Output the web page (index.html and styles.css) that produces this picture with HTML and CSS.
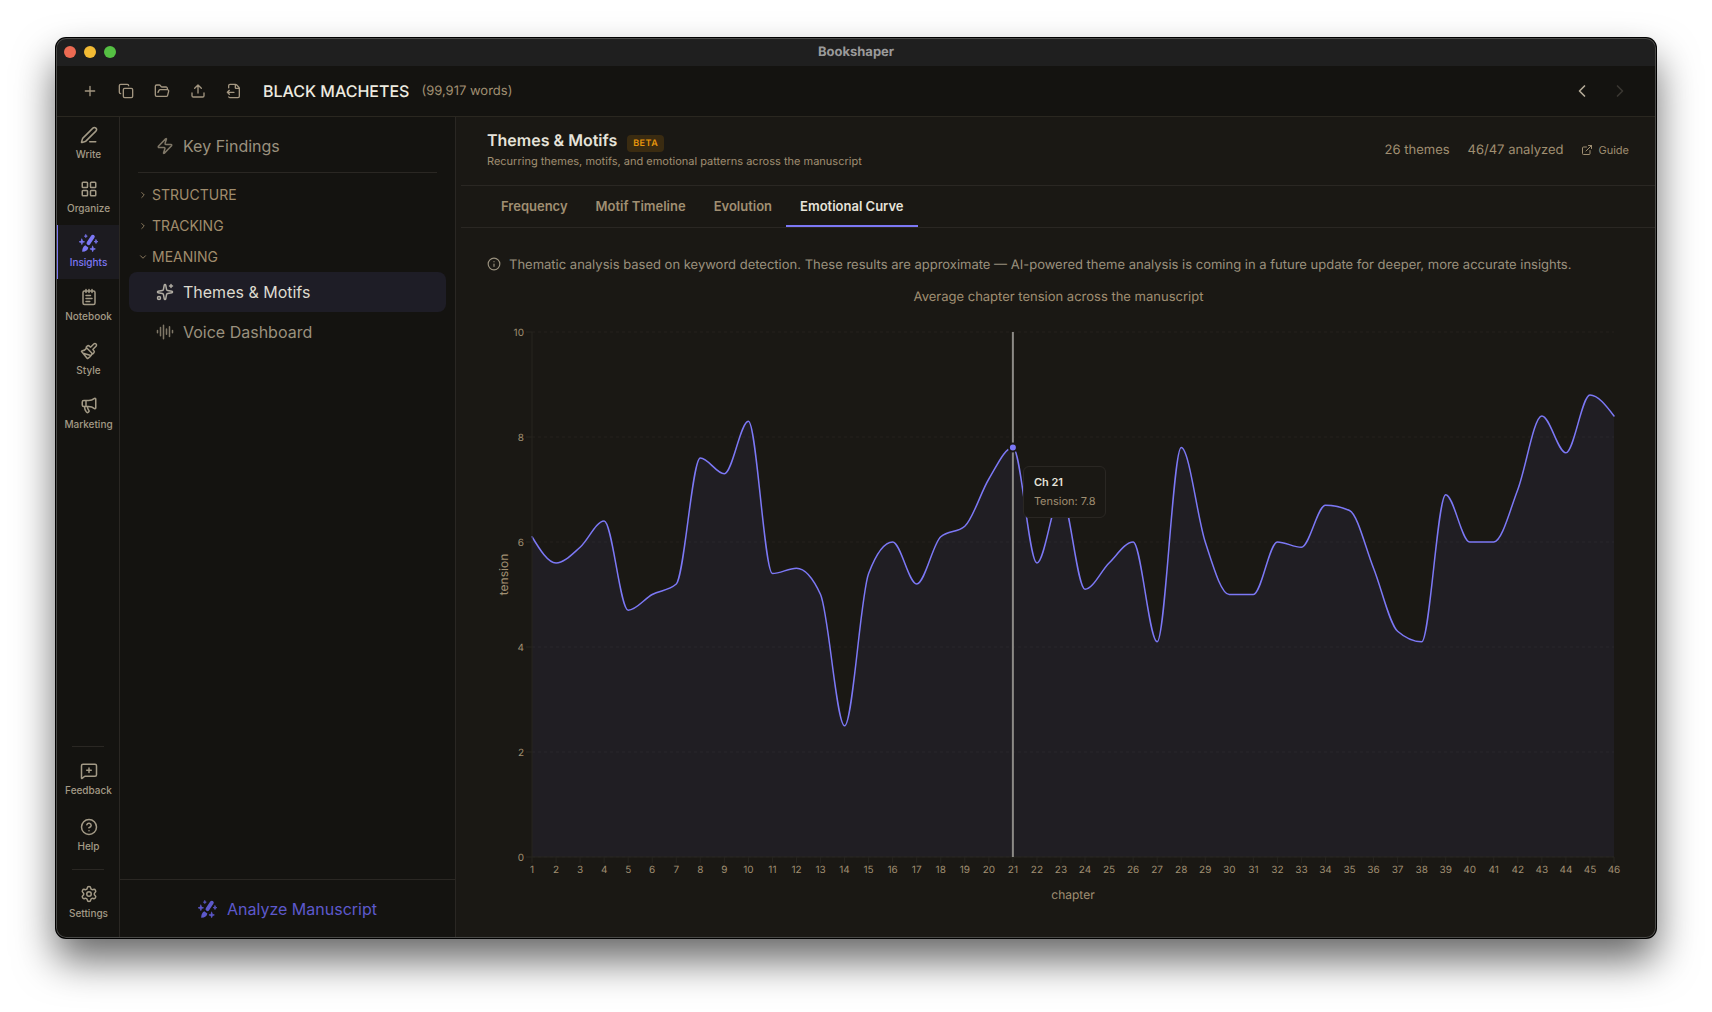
FILE: index.html
```html
<!DOCTYPE html>
<html lang="en">
<head>
    <meta charset="UTF-8">
    <title>Bookshaper</title>
    <link rel="stylesheet" href="styles.css">
</head>
<body>
    <svg class="sprite" aria-hidden="true">
        <symbol id="wand" viewBox="0 0 24 24">
            <path d="M16.600 4.400L11.400 12.200" stroke="currentColor" stroke-width="4.600"/>
            <path d="M7.400 14.600l3.800 2.700c-.3 2.900-2.900 5-7.400 5.200.1-3.300.8-6.500 3.600-7.900z"/>
            <path d="M3.400 7.300l.9 2.400 2.400.9-2.400.9-.9 2.400-.9-2.400-2.400-.9 2.400-.9zM8.200 2l.5 1.300 1.300.5-1.300.5-.5 1.300-.5-1.300-1.300-.5 1.300-.5zM20.400 8.100l.6 1.700 1.700.6-1.700.6-.6 1.700-.6-1.700-1.700-.6 1.700-.6zM16.400 15.800l.9 2.400 2.400.9-2.400.9-.9 2.400-.9-2.400-2.400-.9 2.400-.9z" stroke="currentColor" stroke-width=".8"/>
        </symbol>
    </svg>
    <div class="window">
        <div class="titlebar">
            <div class="lights"><i class="red"></i><i class="yellow"></i><i class="green"></i></div>
            <span>Bookshaper</span>
        </div>

        <header class="toolbar">
            <button class="tool" aria-label="New"><svg viewBox="0 0 24 24"><path d="M5 12h14M12 5v14"/></svg></button>
            <button class="tool" aria-label="Duplicate"><svg viewBox="0 0 24 24"><rect x="8" y="8" width="14" height="14" rx="2"/><path d="M4 16c-1.100 0-2-.9-2-2V4c0-1.100.9-2 2-2h10c1.100 0 2 .9 2 2"/></svg></button>
            <button class="tool" aria-label="Open"><svg viewBox="0 0 24 24"><path d="m6 14 1.500-2.900A2 2 0 0 1 9.240 10H20a2 2 0 0 1 1.940 2.500l-1.540 6a2 2 0 0 1-1.950 1.500H4a2 2 0 0 1-2-2V5a2 2 0 0 1 2-2h3.900a2 2 0 0 1 1.690.9l.81 1.200a2 2 0 0 0 1.670.9H18a2 2 0 0 1 2 2v2"/></svg></button>
            <button class="tool" aria-label="Export"><svg viewBox="0 0 24 24"><path d="M12 3v12M17 8l-5-5-5 5M21 15v4a2 2 0 0 1-2 2H5a2 2 0 0 1-2-2v-4"/></svg></button>
            <button class="tool" aria-label="Import"><svg viewBox="0 0 24 24"><path d="M4.226 20.925A2 2 0 0 0 6 22h12a2 2 0 0 0 2-2V8a2.400 2.400 0 0 0-.706-1.706l-3.588-3.588A2.400 2.400 0 0 0 14 2H6a2 2 0 0 0-2 2v3.127M14 2v5a1 1 0 0 0 1 1h5M5 11l-3 3M5 17l-3-3h10"/></svg></button>
            <h1 class="book">BLACK MACHETES</h1>
            <span class="words">(99,917 words)</span>
            <div class="history">
                <button class="arrow" aria-label="Back"><svg viewBox="0 0 24 24"><path d="m15 18-6-6 6-6"/></svg></button>
                <button class="arrow" aria-label="Forward" disabled><svg viewBox="0 0 24 24"><path d="m9 18 6-6-6-6"/></svg></button>
            </div>
        </header>

        <div class="body">
            <nav class="rail">
                <button class="rail-item"><svg viewBox="0 0 24 24"><path d="M13 21h8M21.174 6.812a1 1 0 0 0-3.986-3.987L3.842 16.174a2 2 0 0 0-.5.830l-1.321 4.352a.5.5 0 0 0 .623.622l4.353-1.320a2 2 0 0 0 .830-.497z"/></svg>Write</button>
                <button class="rail-item"><svg viewBox="0 0 24 24"><rect x="3" y="3" width="7" height="7" rx="1"/><rect x="14" y="3" width="7" height="7" rx="1"/><rect x="14" y="14" width="7" height="7" rx="1"/><rect x="3" y="14" width="7" height="7" rx="1"/></svg>Organize</button>
                <button class="rail-item active"><svg class="solid"><use href="#wand"/></svg>Insights</button>
                <button class="rail-item"><svg viewBox="0 0 24 24"><path d="M8 2v4M12 2v4M16 2v4M8 10h6M8 14h8M8 18h5"/><rect x="4" y="4" width="16" height="18" rx="2"/></svg>Notebook</button>
                <button class="rail-item"><svg viewBox="0 0 24 24"><path d="m14.622 17.897-10.680-2.913M18.376 2.622a1 1 0 1 1 3.002 3.002L17.360 9.643a.5.5 0 0 0 0 .707l.944.944a2.410 2.410 0 0 1 0 3.408l-.944.944a.5.5 0 0 1-.707 0L8.354 7.348a.5.5 0 0 1 0-.707l.944-.944a2.410 2.410 0 0 1 3.408 0l.944.944a.5.5 0 0 0 .707 0zM9 8c-1.804 2.710-3.970 3.460-6.583 3.948a.507.507 0 0 0-.302.819l7.320 8.883a1 1 0 0 0 1.185.204C12.735 20.405 16 16.792 16 15"/></svg>Style</button>
                <button class="rail-item"><svg viewBox="0 0 24 24"><path d="M11 6a13 13 0 0 0 8.400-2.800A1 1 0 0 1 21 4v12a1 1 0 0 1-1.600.8A13 13 0 0 0 11 14H5a2 2 0 0 1-2-2V8a2 2 0 0 1 2-2zM6 14a12 12 0 0 0 2.400 7.200 2 2 0 0 0 3.200-2.400A8 8 0 0 1 10 14M8 6v8"/></svg>Marketing</button>
                <div class="rail-bottom">
                    <hr>
                    <button class="rail-item"><svg viewBox="0 0 24 24"><path d="M22 17a2 2 0 0 1-2 2H6.828a2 2 0 0 0-1.414.586l-2.202 2.202A.71.71 0 0 1 2 21.286V5a2 2 0 0 1 2-2h16a2 2 0 0 1 2 2zM12 8v6M9 11h6"/></svg>Feedback</button>
                    <button class="rail-item"><svg viewBox="0 0 24 24"><circle cx="12" cy="12" r="10"/><path d="M9.090 9a3 3 0 0 1 5.830 1c0 2-3 3-3 3M12 17h.01"/></svg>Help</button>
                    <hr>
                    <button class="rail-item"><svg viewBox="0 0 24 24"><path d="M9.671 4.136a2.340 2.340 0 0 1 4.659 0 2.340 2.340 0 0 0 3.319 1.915 2.340 2.340 0 0 1 2.330 4.033 2.340 2.340 0 0 0 0 3.831 2.340 2.340 0 0 1-2.330 4.033 2.340 2.340 0 0 0-3.319 1.915 2.340 2.340 0 0 1-4.659 0 2.340 2.340 0 0 0-3.320-1.915 2.340 2.340 0 0 1-2.330-4.033 2.340 2.340 0 0 0 0-3.831A2.340 2.340 0 0 1 6.350 6.051a2.340 2.340 0 0 0 3.319-1.915"/><circle cx="12" cy="12" r="3"/></svg>Settings</button>
                </div>
            </nav>

            <aside class="panel">
                <div class="panel-list">
                    <button class="row"><svg viewBox="0 0 24 24"><path d="M4 14a1 1 0 0 1-.78-1.630l9.900-10.200a.5.5 0 0 1 .86.460l-1.920 6.020A1 1 0 0 0 13 10h7a1 1 0 0 1 .78 1.630l-9.900 10.200a.5.5 0 0 1-.86-.460l1.920-6.020A1 1 0 0 0 11 14z"/></svg>Key Findings</button>
                    <hr>
                    <button class="group"><svg viewBox="0 0 24 24"><path d="m9 18 6-6-6-6"/></svg>STRUCTURE</button>
                    <button class="group"><svg viewBox="0 0 24 24"><path d="m9 18 6-6-6-6"/></svg>TRACKING</button>
                    <button class="group"><svg viewBox="0 0 24 24"><path d="m6 9 6 6 6-6"/></svg>MEANING</button>
                    <button class="row active"><svg viewBox="0 0 24 24"><path d="M11.017 2.814a1 1 0 0 1 1.966 0l1.051 5.558a2 2 0 0 0 1.594 1.594l5.558 1.051a1 1 0 0 1 0 1.966l-5.558 1.051a2 2 0 0 0-1.594 1.594l-1.051 5.558a1 1 0 0 1-1.966 0l-1.051-5.558a2 2 0 0 0-1.594-1.594l-5.558-1.051a1 1 0 0 1 0-1.966l5.558-1.051a2 2 0 0 0 1.594-1.594zM20 2v4M22 4h-4"/><circle cx="4" cy="20" r="2"/></svg>Themes &amp; Motifs</button>
                    <button class="row"><svg viewBox="0 0 24 24"><path d="M2 10v3M6 6v11M10 3v18M14 8v7M18 5v13M22 10v3"/></svg>Voice Dashboard</button>
                </div>
                <button class="analyze"><svg class="solid"><use href="#wand"/></svg>Analyze Manuscript</button>
            </aside>

            <main class="main">
                <div class="head">
                    <div>
                        <h2>Themes &amp; Motifs <span class="beta">BETA</span></h2>
                        <p>Recurring themes, motifs, and emotional patterns across the manuscript</p>
                    </div>
                    <div class="stats">
                        <span>26 themes</span>
                        <span>46/47 analyzed</span>
                        <a href="#guide"><svg viewBox="0 0 24 24"><path d="M15 3h6v6M10 14 21 3M18 13v6a2 2 0 0 1-2 2H5a2 2 0 0 1-2-2V8a2 2 0 0 1 2-2h6"/></svg>Guide</a>
                    </div>
                </div>
                <div class="tabs" role="tablist">
                    <button role="tab">Frequency</button>
                    <button role="tab">Motif Timeline</button>
                    <button role="tab">Evolution</button>
                    <button role="tab" class="active" aria-selected="true">Emotional Curve</button>
                </div>
                <section class="content">
                    <p class="note"><svg viewBox="0 0 24 24"><circle cx="12" cy="12" r="10"/><path d="M12 16v-4M12 8h.01"/></svg>Thematic analysis based on keyword detection. These results are approximate — AI-powered theme analysis is coming in a future update for deeper, more accurate insights.</p>
                    <p class="caption">Average chapter tension across the manuscript</p>
                    <div class="chart" id="chart">
                        <svg id="plot"></svg>
                        <div class="tip" id="tip"><b></b><span></span></div>
                    </div>
                </section>
            </main>
        </div>
    </div>
    <script src="chart.js"></script>
</body>
</html>
```
FILE: styles.css
```css
*{box-sizing:border-box;margin:0;padding:0}
body{height:100vh;padding:38px 56px 74px;background:#fff;font-family:Inter,"Liberation Sans",sans-serif;text-rendering:geometricPrecision;color:#a08f72}
button{background:none;border:0;font:inherit;color:inherit;cursor:pointer}
svg{fill:none;stroke:currentColor;stroke-width:2;stroke-linecap:round;stroke-linejoin:round;flex:none}
.solid{fill:currentColor;stroke:none}
hr{border:0;height:1px;background:#2a2723}
.sprite{position:absolute;width:0;height:0}

.window{position:relative;height:100%;display:flex;flex-direction:column;background:#141310;border-radius:10px;overflow:hidden;box-shadow:0 0 0 1px #000,0 22px 40px rgba(0,0,0,.6)}
.window::after{content:"";position:absolute;inset:0;border-radius:10px;box-shadow:inset 0 0 0 1px #4a4a48;pointer-events:none}

.titlebar{display:grid;grid-template-columns:1fr auto 1fr;align-items:center;height:28px;padding:0 8px;background:#1f1f1f;font-size:13px;font-weight:700;color:#9a9a9a}
.lights{display:flex;gap:8px}
.lights i{width:12px;height:12px;border-radius:50%}
.red{background:#ec6a52}
.yellow{background:#f3bb34}
.green{background:#55c043}

.toolbar{display:flex;align-items:center;height:51px;padding:0 26px 0 16px;border-bottom:1px solid #2a2720}
.tool{display:flex;justify-content:center;width:36px;color:#a39680}
.tool svg{width:16px;height:16px}
.book{margin-left:11px;font-size:16px;font-weight:500;line-height:20px;color:#eeebe0}
.words{margin-left:12px;font-size:13px}
.history{display:flex;gap:18px;margin-left:auto}
.arrow{display:flex;color:#b5ab98}
.arrow svg{width:20px;height:20px}
.arrow:disabled{color:#3a3731}

.body{flex:1;display:flex;min-height:0}
.rail{display:flex;flex-direction:column;width:64px;padding-bottom:8px;border-right:1px solid #2a2723}
.rail-item{display:flex;flex-direction:column;align-items:center;gap:3px;width:100%;height:54px;padding-top:9px;border-left:2px solid transparent;font-size:10px;line-height:14px;font-weight:500;color:#a39a86}
.rail-item svg{width:18px;height:18px}
.rail-item.active{border-color:#7c78f5;background:#1c1b20;color:#7c78f5}
.rail-item .solid,.analyze .solid{width:20px;height:20px}
.rail-item .solid{margin:-1px 0}
.rail-bottom{display:flex;flex-direction:column;align-items:center;gap:2px;margin-top:auto}
.rail-bottom hr{width:32px;margin:4px 0}

.panel{display:flex;flex-direction:column;width:336px;border-right:1px solid #2a2723}
.panel-list{flex:1;display:flex;flex-direction:column;padding:9px}
.panel hr{margin:6px 9px}
.row{display:flex;align-items:center;gap:9px;height:40px;padding:0 27px;border-radius:8px;font-size:16px;line-height:20px;color:#9a917e}
.row svg{width:18px;height:18px;color:#7f7767}
.row.active{background:#1e1d26;color:#dddacf}
.row.active svg{color:#b0aca2}
.group{display:flex;align-items:center;gap:4px;height:31px;padding:0 9px;font-size:14px;color:#a08c6c}
.group svg{width:10px;height:10px}
.analyze{display:flex;align-items:center;justify-content:center;gap:9px;height:59px;border-top:1px solid #2a2723;font-size:16px;line-height:20px;color:#5d59cc}

.main{flex:1;min-width:0;display:flex;flex-direction:column;padding-left:5px;background:#1a1814}
.head{display:flex;align-items:center;justify-content:space-between;height:69px;padding:0 27px 0 26px;border-bottom:1px solid #2a2723}
.head h2{display:flex;align-items:baseline;gap:10px;font-size:16px;line-height:22px;font-weight:600;color:#e6e3da}
.head p{margin-top:1px;padding-bottom:5px;font-size:11px;line-height:16px}
.beta{padding:0 6px;border-radius:4px;background:#3a2b11;font-size:9px;line-height:17px;letter-spacing:.5px;color:#e8960c}
.stats{display:flex;align-items:center;gap:18px;padding-bottom:2px;font-size:13px}
.stats a{display:flex;align-items:center;gap:5px;font-size:11px;color:inherit;text-decoration:none}
.stats svg{width:12px;height:12px}
.tabs{display:flex;height:42px;padding:0 26px;border-bottom:1px solid #2a2723}
.tabs button{padding:0 14px;border-bottom:2px solid transparent;font-size:13px;font-weight:600;color:#a08f72}
.tabs .active{border-color:#7c78f5;color:#e6e3da}
.content{flex:1;min-height:0;display:flex;flex-direction:column;padding:26px}
.note{display:flex;gap:8px;font-size:13px;line-height:22px;color:#9a917e}
.note svg{width:14px;height:14px;margin-top:3px}
.caption{margin-top:10px;font-size:13px;line-height:22px;text-align:center}

.chart{position:relative;flex:1;min-height:0;margin-top:12px}
#plot{display:block;width:100%;height:100%;position:absolute}
#plot text{fill:#a08f72;stroke:none;font-size:10px}
#plot .axis-name{font-size:12px}
#plot .grid{stroke:#24211c;stroke-width:1;stroke-dasharray:3 3;stroke-linecap:butt}
#plot .axis{stroke:#26241f;stroke-width:1;stroke-linecap:butt}
#plot .area{fill:#7470f5;fill-opacity:.07;stroke:none}
#plot .line{stroke:#7c78f5;stroke-width:1.5}
#plot .cursor{stroke:#8c8a86;stroke-width:2;stroke-linecap:butt}
#plot .dot{fill:#7c78f5;stroke:#1a1814;stroke-width:2}
.tip{position:absolute;display:grid;gap:4px;padding:8px 10px;border:1px solid #2a2723;border-radius:6px;background:#1a1814;font-size:11px;line-height:15px}
.tip b{font-weight:600;color:#e6e3da}
```
FILE: chart.js
```js
const tension = [6.1, 5.6, 5.9, 6.4, 4.7, 5, 5.2, 7.6, 7.3, 8.3, 5.4, 5.5, 5, 2.5, 5.4, 6, 5.2, 6.1, 6.3, 7.2, 7.8, 5.6, 6.9,
    5.1, 5.6, 6, 4.1, 7.8, 6, 5, 5, 6, 5.9, 6.7, 6.6, 5.5, 4.3, 4.1, 6.9, 6, 6, 7, 8.4, 7.7, 8.8, 8.4];
const active = 20;
const pad = { top: 12, right: 16, bottom: 55, left: 45 };

// monotone cubic curve through the points
function curve(p) {
    const n = p.length;
    const s = [], m = [];
    for (let i = 0; i < n - 1; i++) s[i] = (p[i + 1][1] - p[i][1]) / (p[i + 1][0] - p[i][0]);
    for (let i = 1; i < n - 1; i++) {
        m[i] = (Math.sign(s[i - 1]) + Math.sign(s[i])) * Math.min(Math.abs(s[i - 1]), Math.abs(s[i]), Math.abs(s[i - 1] + s[i]) / 4) || 0;
    }
    m[0] = (3 * s[0] - m[1]) / 2;
    m[n - 1] = (3 * s[n - 2] - m[n - 2]) / 2;
    let d = `M${p[0]}`;
    for (let i = 0; i < n - 1; i++) {
        const dx = (p[i + 1][0] - p[i][0]) / 3;
        d += `C${p[i][0] + dx},${p[i][1] + dx * m[i]},${p[i + 1][0] - dx},${p[i + 1][1] - dx * m[i + 1]},${p[i + 1]}`;
    }
    return d;
}

function draw() {
    const box = document.getElementById('chart');
    const w = box.clientWidth, h = box.clientHeight;
    const right = w - pad.right, bottom = h - pad.bottom;
    const x = i => pad.left + i * (right - pad.left) / (tension.length - 1);
    const y = v => bottom - v * (bottom - pad.top) / 10;
    const points = tension.map((v, i) => [x(i), y(v)]);
    const path = curve(points);
    let out = '';

    for (let v = 0; v <= 10; v += 2) {
        out += `<path class="grid" d="M${pad.left} ${y(v)}H${right}"/>`;
        out += `<path class="axis" d="M${pad.left - 6} ${y(v)}h6"/>`;
        out += `<text x="${pad.left - 8}" y="${y(v) + 4}" text-anchor="end">${v}</text>`;
    }
    out += `<path class="area" d="${path}V${bottom}H${pad.left}Z"/><path class="line" d="${path}"/>`;
    out += `<path class="axis" d="M${pad.left} ${pad.top}V${bottom}H${right}"/>`;
    tension.forEach((v, i) => {
        out += `<path class="axis" d="M${x(i)} ${bottom}v6"/>`;
        out += `<text x="${x(i)}" y="${bottom + 16}" text-anchor="middle">${i + 1}</text>`;
    });
    const midY = (pad.top + bottom) / 2 - 20;
    out += `<text class="axis-name" text-anchor="middle" transform="translate(21 ${midY}) rotate(-90)">tension</text>`;
    out += `<text class="axis-name" text-anchor="middle" x="${(pad.left + right) / 2}" y="${bottom + 42}">chapter</text>`;
    out += `<path class="cursor" d="M${x(active)} ${pad.top}V${bottom}"/>`;
    out += `<circle class="dot" cx="${x(active)}" cy="${y(tension[active])}" r="4"/>`;
    document.getElementById('plot').innerHTML = out;

    const tip = document.getElementById('tip');
    tip.children[0].textContent = 'Ch ' + (active + 1);
    tip.children[1].textContent = 'Tension: ' + tension[active];
    tip.style.left = x(active) + 10 + 'px';
    tip.style.top = y(tension[active]) + 18 + 'px';
}

draw();
window.addEventListener('resize', draw);
```
